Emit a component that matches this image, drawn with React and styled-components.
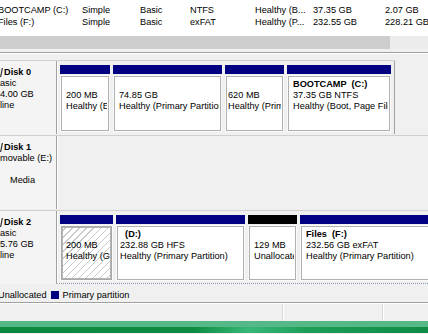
import styled, { createGlobalStyle } from "styled-components";

const GlobalStyle = createGlobalStyle`
    html, body {
        margin: 0;
        padding: 0;
        background: #f0f0f0;
        overflow: hidden;
    }
    body {
        font-family: "Liberation Sans", Arial, sans-serif;
        font-size: 9.2px;
        color: #000;
    }
`;

const Window = styled.div`
    width: 428px;
    height: 334px;
    display: flex;
    flex-direction: column;
    overflow: hidden;
`;

const VolumeList = styled.div`
    height: 36px;
    padding-top: 4px;
    box-sizing: border-box;
    background: #fff;
`;

const VolumeRow = styled.div`
    display: grid;
    grid-template-columns: 84px 58px 50px 65px 58px 72px auto;
    margin-left: -2px;
    height: 12px;
    line-height: 12px;
    white-space: nowrap;
`;

const Cell = styled.div`
    overflow: hidden;
`;

const HScroll = styled.div`
    height: 13px;
    background: #ececec;
    display: flex;
`;

const Thumb = styled.div`
    width: 390px;
    background: #cdcdcd;
`;

const Splitter = styled.div`
    margin-top: 3px;
    border-top: 1px solid #a0a0a0;
    border-bottom: 1px solid #fff;
`;

const DiskPanel = styled.div`
    display: flex;
    flex-direction: column;
    gap: 1px;
    padding-top: 6px;
`;

const DiskRow = styled.div`
    display: flex;
    height: 74px;
    box-sizing: border-box;
    border-top: 1px solid #d0d0d0;
    width: ${(props) => props.$width || "auto"};
`;

const DiskLabel = styled.div`
    width: 57px;
    flex-shrink: 0;
    box-sizing: border-box;
    padding-top: 6px;
    background: #f4f4f4;
    border-right: 1px solid #a0a0a0;
    line-height: 11px;
    white-space: nowrap;
    overflow: hidden;
`;

const LabelLine = styled.div`
    display: flex;
    align-items: center;
    height: 11px;
    overflow: hidden;
    padding-left: ${(props) => props.$indent || 0}px;
    font-weight: ${(props) => (props.$bold ? "bold" : "normal")};
`;

const IconStub = styled.svg`
    width: 3px;
    height: 9px;
    margin-right: 1px;
    flex-shrink: 0;
`;

const PartArea = styled.div`
    flex: 1;
    display: flex;
    gap: 3px;
    padding: 4px 0 2px 2px;
    border-left: 1px solid #fff;
    overflow: hidden;
    border-right: ${(props) => (props.$closed ? "1px solid #a0a0a0" : "none")};
    border-bottom: ${(props) => (props.$focused ? "1px dotted #8a96aa" : "none")};
`;

const Partition = styled.div`
    width: ${(props) => props.$w}px;
    flex-shrink: 0;
    display: flex;
    flex-direction: column;
`;

const Bar = styled.div`
    height: 9px;
    background: ${(props) => (props.$unalloc ? "#000" : "#000080")};
`;

const PartBody = styled.div`
    flex: 1;
    margin-top: 1px;
    box-sizing: border-box;
    padding: 3px 2px 0 ${(props) => props.$indent ?? 5}px;
    border: 1px solid #fafafa;
    box-shadow: inset 0 0 0 1px ${(props) => (props.$hatched ? "#a8a8a8" : "#b0b0b0")};
    outline: ${(props) => (props.$hatched ? "1px solid #b4b4b4" : "none")};
    outline-offset: -3px;
    background: ${(props) =>
        props.$hatched
            ? "repeating-linear-gradient(135deg, #fff 0 4px, #c9c9c9 4px 5px)"
            : "#fff"};
    overflow: hidden;
    line-height: 11px;
    white-space: pre;
`;

const PartLine = styled.div`
    height: 11px;
    overflow: hidden;
    font-weight: ${(props) => (props.$bold ? "bold" : "normal")};
`;

const Legend = styled.div`
    height: 19px;
    box-sizing: border-box;
    padding-top: 3px;
    display: flex;
    align-items: center;
    margin-left: -2px;
    border-bottom: 1px solid #a0a0a0;
    white-space: nowrap;
`;

const Swatch = styled.span`
    width: 8px;
    height: 8px;
    margin: 0 4px 0 4px;
    background: #000080;
`;

const StatusBar = styled.div`
    height: 18px;
    box-sizing: border-box;
    border-top: 1px solid #fff;
    display: grid;
    grid-template-columns: 283px 100px 1fr;
`;

const StatusCell = styled.div`
    border-right: 1px solid #d9d9d9;
    box-shadow: 1px 0 0 #fff;
    &:last-child {
        border-right: none;
        box-shadow: none;
    }
`;

const Taskbar = styled.div`
    height: 12px;
    display: flex;
    flex-direction: column;
`;

const TaskEdge = styled.div`
    height: 6px;
    background: #55b987;
`;

const TaskBody = styled.div`
    flex: 1;
    background: linear-gradient(90deg, #0b8a3f 0%, #0c8b41 45%, #37b877 58%, #1c9d58 72%, #0e8c46 100%);
`;

const volumes = [
    ["BOOTCAMP (C:)", "Simple", "Basic", "NTFS", "Healthy (B...", "37.35 GB", "2.07 GB"],
    ["Files (F:)", "Simple", "Basic", "exFAT", "Healthy (P...", "232.55 GB", "228.21 GB"],
];

const disks = [
    {
        label: ["Disk 0", "asic", "4.00 GB", "line"],
        width: "395px",
        closed: true,
        parts: [
            { w: 50, lines: ["", "200 MB", "Healthy (EFI System Partition)"] },
            { w: 109, lines: ["", "74.85 GB", "Healthy (Primary Partition)"] },
            { w: 59, indent: 2, lines: ["", "620 MB", "Healthy (Primary Partition)"] },
            { w: 104, lines: ["BOOTCAMP  (C:)", "37.35 GB NTFS", "Healthy (Boot, Page File, Crash Dump, Primary Partition)"] },
        ],
    },
    {
        label: ["Disk 1", "movable (E:)", "", "Media"],
        labelIndent: [0, 0, 0, 10],
        parts: [],
    },
    {
        label: ["Disk 2", "asic", "5.76 GB", "line"],
        focused: true,
        parts: [
            { w: 53, hatched: true, lines: ["", "200 MB", "Healthy (GPT Protective Partition)"] },
            { w: 129, indent: 3, lines: ["  (D:)", "232.88 GB HFS", "Healthy (Primary Partition)"] },
            { w: 49, unalloc: true, lines: ["", "129 MB", "Unallocated"] },
            { w: 140, lines: ["Files  (F:)", "232.56 GB exFAT", "Healthy (Primary Partition)"] },
        ],
    },
];

const App = () => {
    return (
        <Window>
            <GlobalStyle />
            <VolumeList>
                {volumes.map((v) => (
                    <VolumeRow key={v[0]}>
                        {v.map((c, i) => (
                            <Cell key={i}>{c}</Cell>
                        ))}
                    </VolumeRow>
                ))}
            </VolumeList>
            <HScroll>
                <Thumb />
            </HScroll>
            <Splitter />
            <DiskPanel>
                {disks.map((d) => (
                    <DiskRow key={d.label[0]} $width={d.width}>
                        <DiskLabel>
                            {d.label.map((t, i) => (
                                <LabelLine key={i} $bold={i === 0} $indent={d.labelIndent ? d.labelIndent[i] : 0}>
                                    {i === 0 && (
                                        <IconStub viewBox="0 0 3 9">
                                            <path d="M0.6 9 L2.4 0" stroke="#333" strokeWidth="1.2" />
                                        </IconStub>
                                    )}
                                    {t}
                                </LabelLine>
                            ))}
                        </DiskLabel>
                        <PartArea $closed={d.closed} $focused={d.focused}>
                            {d.parts.map((p, i) => (
                                <Partition key={i} $w={p.w}>
                                    <Bar $unalloc={p.unalloc} />
                                    <PartBody $hatched={p.hatched} $indent={p.indent}>
                                        {p.lines.map((l, j) => (
                                            <PartLine key={j} $bold={j === 0}>{l}</PartLine>
                                        ))}
                                    </PartBody>
                                </Partition>
                            ))}
                        </PartArea>
                    </DiskRow>
                ))}
            </DiskPanel>
            <Legend>
                Unallocated
                <Swatch />
                Primary partition
            </Legend>
            <StatusBar>
                <StatusCell />
                <StatusCell />
                <StatusCell />
            </StatusBar>
            <Taskbar>
                <TaskEdge />
                <TaskBody />
            </Taskbar>
        </Window>
    );
};

export default App;
